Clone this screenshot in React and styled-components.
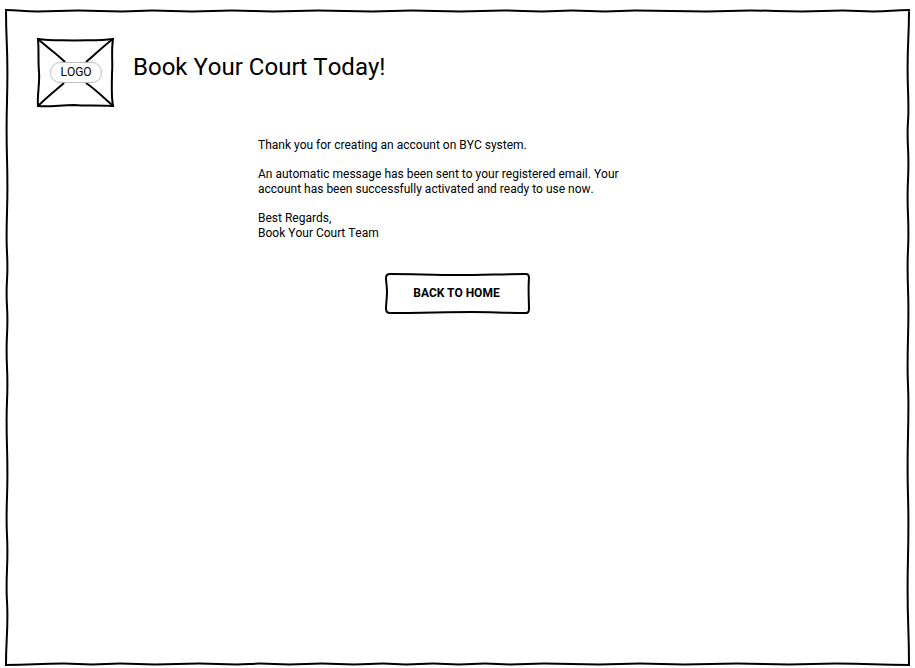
import React from 'react';
import styled, { createGlobalStyle } from 'styled-components';

const GlobalStyle = createGlobalStyle`
  *, *::before, *::after { box-sizing: border-box; }
  body {
    margin: 0;
    background: #fff;
    color: #000;
    font-family: Roboto, "Liberation Sans", sans-serif;
    font-size: 12px;
    font-kerning: none;
    line-height: 15px;
  }
`;

const Page = styled.div`
  position: relative;
  min-height: 100vh;
  padding: 38px 36px;
`;

const Sketch = styled.svg`
  position: absolute;
  inset: 0;
  width: 100%;
  height: 100%;
  overflow: visible;
  pointer-events: none;
  fill: none;
  stroke: #000;
  stroke-width: 2px;

  path { vector-effect: non-scaling-stroke; }
`;

const Header = styled.header`
  display: flex;
  align-items: flex-start;
  gap: 19px;
`;

const Logo = styled.div`
  position: relative;
  display: flex;
  flex: none;
  align-items: center;
  justify-content: center;
  width: 78px;
  height: 69px;
  padding-left: 2px;
`;

const LogoLabel = styled.span`
  position: relative;
  padding: 2px 9px;
  border: 1px solid #bdbdbd;
  border-radius: 10px;
  background: #fff;
`;

const Title = styled.h1`
  margin: 14px 0 0;
  font-size: 24px;
  font-weight: 400;
  line-height: 30px;
`;

const Content = styled.main`
  display: flex;
  flex-direction: column;
  gap: 14px;
  max-width: 399px;
  margin: 31px auto 0;
`;

const Paragraph = styled.p`
  margin: 0;
`;

const HomeButton = styled.button`
  position: relative;
  align-self: center;
  width: 146px;
  height: 42px;
  margin-top: 17px;
  padding: 0 2px 0 0;
  border: 0;
  background: none;
  color: inherit;
  font: inherit;
  font-kerning: auto;
  font-weight: 700;
  cursor: pointer;
`;

// Joins the points with smooth waves running along one axis.
function wave(points, vertical) {
  return points
    .map(([x, y], i) => {
      if (i === 0) return `M${x} ${y}`;
      const [px, py] = points[i - 1];
      const mx = (px + x) / 2;
      const my = (py + y) / 2;
      return vertical
        ? `C${px} ${my} ${x} ${my} ${x} ${y}`
        : `C${mx} ${py} ${mx} ${y} ${x} ${y}`;
    })
    .join('');
}

// Positions where each side of the frame swings from one side to the other.
const swings = {
  top: [37, 78, 122, 152, 192, 232, 273, 318, 372, 412, 460, 503, 542, 572, 605, 635, 707, 750, 802, 843, 873],
  bottom: [64, 92, 120, 155, 199, 237, 260, 289, 322, 354, 383, 406, 433, 459, 485, 510, 544, 599, 640, 684, 737, 789, 836],
  left: [72, 130, 187, 238, 267, 293, 320, 350, 384, 420, 474, 520, 551, 588, 615],
  right: [68, 110, 133, 163, 197, 233, 267, 310, 367, 404, 467, 524, 590],
};

const swing = (list, a, b) => list.map((at, i) => [at, i % 2 ? b : a]);
const flip = ([a, b]) => [b, a];

const framePath = [
  wave([[5, 10], ...swing(swings.top, 11.4, 10.5), [910, 10]]),
  wave([[5, 665], ...swing(swings.bottom, 663.6, 664.4), [910, 665]]),
  wave([[6, 10], ...swing(swings.left, 7.4, 6.6).map(flip), [6, 665]], true),
  wave([[909, 10], ...swing(swings.right, 907.6, 908.4).map(flip), [909, 665]], true),
].join('');

export default function App() {
  return (
    <>
      <GlobalStyle />
      <Page>
        <Sketch viewBox="0 0 915 668" preserveAspectRatio="none" aria-hidden="true">
          <path d={framePath} />
        </Sketch>
        <Header>
          <Logo>
            <Sketch viewBox="0 0 78 69" aria-hidden="true">
              <path d="M2 1C14 3 26 2 38 2.5C52 2 64 3 77 1C75 14 77 24 76 35C76 47 75 57 77 68C62 67 50 68 38 67C25 67 14 69 2 68C1 57 4 45 3 34C2 23 3 13 2 1Z" />
              <path d="M2 1C13 11 20 15 29 24M77 1C66 9 59 17 50 24M2 68C12 58 20 52 28 45M77 68C66 58 59 51 50 45" />
            </Sketch>
            <LogoLabel>LOGO</LogoLabel>
          </Logo>
          <Title>Book Your Court Today!</Title>
        </Header>
        <Content>
          <Paragraph>Thank you for creating an account on BYC system.</Paragraph>
          <Paragraph>
            An automatic message has been sent to your registered email. Your account has been
            successfully activated and ready to use now.
          </Paragraph>
          <Paragraph>
            Best Regards,
            <br />
            Book Your Court Team
          </Paragraph>
          <HomeButton type="button">
            <Sketch viewBox="0 0 146 42" aria-hidden="true">
              <path d="M5 2C28 2 48 3 74 3C98 3 118 2 141 2Q144 2 144 6C143 17 144 28 144 37Q144 41 141 41C118 41 107 40 87 40C61 40 36 41 5 41Q1 41 1 37C1 31 2 26 2 20C2 14 1 10 1 6Q1 2 5 2Z" />
            </Sketch>
            BACK TO HOME
          </HomeButton>
        </Content>
      </Page>
    </>
  );
}
